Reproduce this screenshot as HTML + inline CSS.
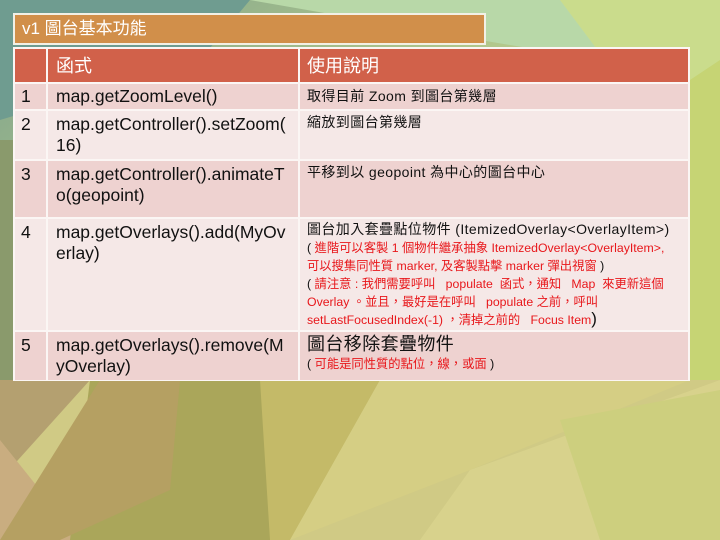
<!DOCTYPE html>
<html><head><meta charset="utf-8"><style>
*{margin:0;padding:0;box-sizing:border-box}
body{width:720px;height:540px;overflow:hidden;position:relative;font-family:"Liberation Sans","Noto Sans CJK TC",sans-serif;}
#bg{position:absolute;left:0;top:0}
.title{position:absolute;left:13px;top:13px;width:473px;height:32px;border:2px solid #f2f0e6;background:#d18f4a;color:#fff;font-size:17px;line-height:28px;padding-left:7px}
.c{position:absolute;color:#111;overflow:hidden}
.h{background:#d1614a;color:#fff;font-size:18px;}
.o{background:#eed2d0}.e{background:#f5e8e7}
.m{font-size:17.5px;line-height:21px;padding:6px 0 0 8px;white-space:nowrap}
.n{font-size:17.5px;line-height:21px;padding:6px 0 0 6px}
.d{font-size:14px;line-height:18px;padding:5px 2px 0 7px;letter-spacing:.4px;white-space:nowrap}
.r{color:#e8171b}
.s{font-size:12.3px;line-height:16px;letter-spacing:0}
</style></head><body>
<svg id="bg" width="720" height="540">
<defs><linearGradient id="g" x1="0" y1="0" x2="1" y2="1"><stop offset="0" stop-color="#7fa38c"/><stop offset=".4" stop-color="#b4c98c"/><stop offset="1" stop-color="#d3cf88"/></linearGradient></defs>
<rect width="720" height="540" fill="url(#g)"/>
<polygon points="0,0 250,0 200,60 0,120" fill="#6f9c90"/>
<polygon points="250,0 720,0 720,80 480,40" fill="#b8d8a8"/>
<polygon points="560,0 720,0 720,200 650,120" fill="#cadc8c"/>
<polygon points="690,80 720,60 720,540 690,540" fill="#c6d474"/>
<polygon points="0,380 720,380 720,540 0,540" fill="#d0ca85"/>
<polygon points="0,380 90,380 0,480" fill="#b4a070"/>
<polygon points="0,440 80,540 0,540" fill="#c9ad80"/>
<polygon points="90,380 270,380 280,540 70,540" fill="#aaa65a"/>
<polygon points="100,380 180,380 170,490 60,540 0,540" fill="#b5a062"/>
<polygon points="260,380 380,380 290,540 270,540" fill="#c4ba68"/>
<polygon points="380,380 690,380 470,470 290,540" fill="#d5ce84"/>
<polygon points="470,470 720,380 720,540 420,540" fill="#d8d28c"/>
<polygon points="560,420 720,390 720,540 600,540" fill="#cdcf7e"/>
<polygon points="0,140 14,140 14,380 0,380" fill="#8a9a6c"/>
</svg>
<div class="title">v1 圖台基本功能</div>
<div style="position:absolute;left:13px;top:47px;width:677px;height:334px;background:#fbf6f4"></div>
<div class="c h" style="left:15px;top:49px;width:31px;height:33px"></div>
<div class="c h" style="left:48px;top:49px;width:250px;height:33px;padding:3px 8px">函式</div>
<div class="c h" style="left:300px;top:49px;width:388px;height:33px;padding:3px 7px">使用說明</div>

<div class="c o n" style="left:15px;top:84px;width:31px;height:25px;padding-top:2px">1</div>
<div class="c o m" style="left:48px;top:84px;width:250px;height:25px;padding-top:2px">map.getZoomLevel()</div>
<div class="c o d" style="left:300px;top:84px;width:388px;height:25px;padding-top:3px">取得目前 Zoom 到圖台第幾層</div>

<div class="c e n" style="left:15px;top:111px;width:31px;height:48px;padding-top:3px">2</div>
<div class="c e m" style="left:48px;top:111px;width:250px;height:48px;padding-top:3px">map.getController().setZoom(<br>16)</div>
<div class="c e d" style="left:300px;top:111px;width:388px;height:48px;padding-top:2px">縮放到圖台第幾層</div>

<div class="c o n" style="left:15px;top:161px;width:31px;height:56px;padding-top:3px">3</div>
<div class="c o m" style="left:48px;top:161px;width:250px;height:56px;padding-top:3px">map.getController().animateT<br>o(geopoint)</div>
<div class="c o d" style="left:300px;top:161px;width:388px;height:56px;padding-top:2px">平移到以 geopoint 為中心的圖台中心</div>

<div class="c e n" style="left:15px;top:219px;width:31px;height:111px;padding-top:3px">4</div>
<div class="c e m" style="left:48px;top:219px;width:250px;height:111px;padding-top:3px">map.getOverlays().add(MyOv<br>erlay)</div>
<div class="c e d" style="left:300px;top:219px;width:388px;height:111px;padding-top:1px">圖台加入套疊點位物件 (ItemizedOverlay&lt;OverlayItem&gt;)<br>
<span class="s">( <span class="r">進階可以客製 1 個物件繼承抽象 ItemizedOverlay&lt;OverlayItem&gt;,<br>可以搜集同性質 marker, 及客製點擊 marker 彈出視窗</span> )</span><br>
<span class="s" style="line-height:16px">( <span class="r">請注意 : 我們需要呼叫 &nbsp; populate &nbsp;函式，通知 &nbsp; Map &nbsp;來更新這個<br>Overlay 。並且，最好是在呼叫 &nbsp; populate 之前，呼叫<br>setLastFocusedIndex(-1) ，清掉之前的 &nbsp; Focus Item</span><span style="font-size:17px">)</span></span></div>

<div class="c o n" style="left:15px;top:332px;width:31px;height:48px;padding-top:3px">5</div>
<div class="c o m" style="left:48px;top:332px;width:250px;height:48px;padding-top:3px">map.getOverlays().remove(M<br>yOverlay)</div>
<div class="c o d" style="left:300px;top:332px;width:388px;height:48px;padding-top:2px"><span style="font-size:18px;line-height:20px">圖台移除套疊物件</span><br><span class="s" style="line-height:14px">( <span class="r">可能是同性質的點位，線，或面</span> )</span></div>
</body></html>
